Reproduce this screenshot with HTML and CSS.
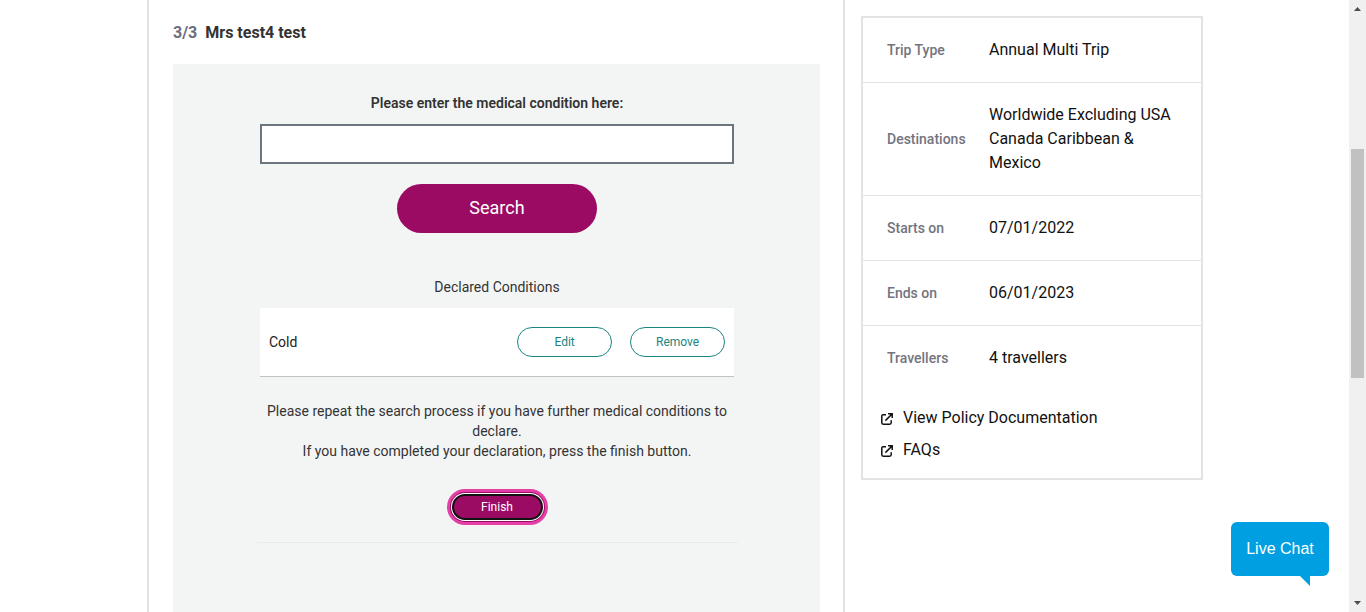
FILE: index.html
```html
<!DOCTYPE html>
<html lang="en">
<head>
<meta charset="utf-8">
<title>Medical declaration</title>
<link rel="stylesheet" href="styles.css">
</head>
<body>
<div class="viewport">
  <div class="page">
    <main class="screening">
      <h2 class="traveller"><span class="step">3/3</span> <span>Mrs test4 test</span></h2>
      <div class="panel">
        <form class="card">
          <label class="card-label" for="condition">Please enter the medical condition here:</label>
          <input class="condition-input" id="condition" type="text">
          <button class="btn-search" type="button">Search</button>
          <p class="declared-title">Declared Conditions</p>
          <ul class="declared-list">
            <li class="declared-item">
              <span class="declared-name">Cold</span>
              <button class="btn-outline" type="button">Edit</button>
              <button class="btn-outline" type="button">Remove</button>
            </li>
          </ul>
          <p class="help">Please repeat the search process if you have further medical conditions to declare.<br>If you have completed your declaration, press the finish button.</p>
          <button class="btn-finish" type="button">Finish</button>
        </form>
      </div>
    </main>
    <aside class="summary">
      <dl class="details">
        <div class="row"><dt>Trip Type</dt><dd>Annual Multi Trip</dd></div>
        <div class="row"><dt>Destinations</dt><dd>Worldwide Excluding USA Canada Caribbean &amp; Mexico</dd></div>
        <div class="row"><dt>Starts on</dt><dd>07/01/2022</dd></div>
        <div class="row"><dt>Ends on</dt><dd>06/01/2023</dd></div>
        <div class="row"><dt>Travellers</dt><dd>4 travellers</dd></div>
      </dl>
      <nav class="links">
        <a class="link" href="#policy">
          <svg class="link-icon" viewBox="0 0 12 12" aria-hidden="true"><path d="M5 1.7H2.2Q.8 1.7.8 3.1v6.7q0 1.4 1.4 1.4h6.6q1.4 0 1.4-1.4V7.2M7 .8h4.2V5M11 1 4.4 7.6"/></svg>
          View Policy Documentation</a>
        <a class="link" href="#faqs">
          <svg class="link-icon" viewBox="0 0 12 12" aria-hidden="true"><path d="M5 1.7H2.2Q.8 1.7.8 3.1v6.7q0 1.4 1.4 1.4h6.6q1.4 0 1.4-1.4V7.2M7 .8h4.2V5M11 1 4.4 7.6"/></svg>
          FAQs</a>
      </nav>
    </aside>
  </div>
  <div class="scrollbar" aria-hidden="true">
    <svg class="scroll-arrow" viewBox="0 0 17 17"><path d="M5 11h7L8.500 7z"/></svg>
    <div class="scroll-thumb"></div>
    <svg class="scroll-arrow scroll-down" viewBox="0 0 17 17"><path d="M5 6h7L8.500 10z"/></svg>
  </div>
</div>
<button class="chat" type="button">Live Chat
  <svg class="chat-tail" viewBox="0 0 10 10" aria-hidden="true"><path d="M0 0h10v10z"/></svg>
</button>
</body>
</html>
```
FILE: styles.css
```css
* { box-sizing: border-box; }

body {
  margin: 0;
  background: #fff;
  color: #333;
  font: 14px/20px Roboto, "Liberation Sans", sans-serif;
}

h2, p, ul, dl, dd { margin: 0; padding: 0; }
ul { list-style: none; }
button { font-family: inherit; cursor: pointer; }

.viewport {
  display: flex;
  height: 100vh;
  overflow: hidden;
}

.page {
  flex: 1;
  display: flex;
  align-items: flex-start;
  gap: 16px;
  max-width: 1057px;
  margin: 0 auto;
}

.screening {
  flex: 1;
  display: flex;
  flex-direction: column;
  min-height: 100vh;
  margin-left: 1px;
  padding: 21px 23px 0 24px;
  border: solid #e3e3e5;
  border-width: 0 2px;
}

.traveller {
  display: flex;
  gap: 8px;
  margin-bottom: 19px;
  font-size: 16px;
  line-height: 24px;
  font-weight: 700;
}
.step { color: #6c6d7c; }

.panel {
  flex: 1;
  background: #f3f5f5;
}

.card {
  display: flex;
  flex-direction: column;
  align-items: center;
  width: 75%;
  margin: 0 auto;
  padding: 29px 5px 22px 6px;
  border-bottom: 1px solid #e8eaeb;
  border-radius: 4px;
  text-align: center;
}

.card-label {
  margin-bottom: 11px;
  font-weight: 600;
}

.condition-input {
  width: 100%;
  height: 40px;
  padding: 0 10px;
  border: 2px solid #6b757d;
  border-radius: 0;
  background: #fff;
  font: inherit;
}

.btn-search {
  min-width: 200px;
  margin: 20px 0 44px;
  padding: 14px 24px 15px;
  border: 0;
  border-radius: 25px;
  background: #9b0b64;
  color: #fff;
  font-size: 18px;
  line-height: 20px;
}

.declared-list {
  width: 100%;
  margin: 11px 0 24px;
}

.declared-item {
  display: flex;
  align-items: center;
  gap: 18px;
  padding: 19px 9px;
  border-bottom: 1px solid #bfc3c3;
  background: #fff;
}
.declared-name {
  flex: 1;
  text-align: left;
  color: #222;
}

.btn-outline {
  width: 95px;
  padding: 4px 8px;
  border: 1px solid #1a8580;
  border-radius: 15px;
  background: #fff;
  color: #1a8580;
  font-size: 12px;
  line-height: 20px;
}

.btn-finish {
  min-width: 91px;
  margin: 33px 0 0;
  padding: 1px 16px;
  border: 2px solid #111;
  border-radius: 14px;
  background: #9b0b64;
  box-shadow: 0 0 0 1px #fff, 0 0 0 2px #9b0b64, 0 0 0 5px #e33fa5;
  color: #fff;
  font-size: 12px;
  line-height: 20px;
}

.summary {
  flex: 0 0 342px;
  margin-top: 16px;
  border: 2px solid #e3e3e5;
}

.row {
  display: grid;
  grid-template-columns: 78px 1fr;
  gap: 24px;
  align-items: center;
  padding: 20px 24px;
  border-bottom: 1px solid #e3e3e5;
}
.row:last-child { border-bottom: 0; }
.row dt {
  color: #73747e;
  font-weight: 500;
}
.row dd {
  color: #111;
  font-size: 16px;
  line-height: 24px;
}

.links {
  display: flex;
  flex-direction: column;
  gap: 8px;
  padding: 16px 18px;
}
.link {
  display: flex;
  align-items: center;
  gap: 10px;
  color: #111;
  font-size: 16px;
  line-height: 24px;
  text-decoration: none;
}
.link-icon {
  width: 12px;
  height: 12px;
  margin-top: 2px;
  fill: none;
  stroke: #111;
  stroke-width: 1.5;
}

.scrollbar {
  flex: 0 0 17px;
  display: grid;
  grid-template-rows: 17px 132fr 229fr 217fr 17px;
  background: #f0f0f0;
}
.scroll-arrow {
  width: 17px;
  height: 17px;
  fill: #4d4d4d;
}
.scroll-thumb {
  grid-row: 3;
  margin: 0 2px;
  background: #c1c1c1;
}
.scroll-down { grid-row: 5; }

.chat {
  position: fixed;
  right: 37px;
  bottom: 36px;
  min-width: 98px;
  padding: 15px 12px;
  border: 0;
  border-radius: 6px;
  background: #009fe1;
  color: #fff;
  font: 16px/24px "Liberation Sans", Arial, sans-serif;
}
.chat-tail {
  position: absolute;
  top: 100%;
  right: 19px;
  width: 10px;
  height: 10px;
  fill: #009fe1;
}
```
